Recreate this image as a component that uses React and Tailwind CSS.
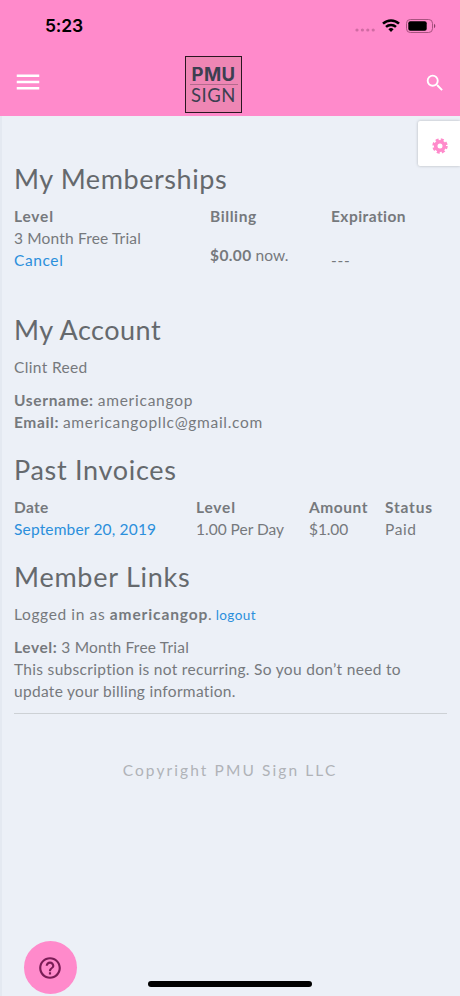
import React from "react";
import { MdMenu, MdSearch, MdHelpOutline } from "react-icons/md";

const link = "text-[#2b8fdc]";

function StatusBar() {
    return (
        <div className="flex h-[51px] items-center justify-between pl-[45px] pr-[24px]">
            <span className="font-['Inter'] text-[17.5px] font-semibold leading-none tracking-[-0.15px] text-black">
                5:23
            </span>
            <div className="flex items-center">
                <svg width="21" height="12" viewBox="0 0 21 12" className="mr-[6px]" fill="#d06ba3">
                    <circle cx="2" cy="10" r="1.6" />
                    <circle cx="7.4" cy="10" r="1.6" />
                    <circle cx="12.8" cy="10" r="1.6" />
                    <circle cx="18.2" cy="10" r="1.6" />
                </svg>
                <svg width="18" height="13" viewBox="0 0 18 13" className="mr-[6px]" fill="none" stroke="#000" strokeWidth="2.5">
                    <path d="M1 4.6a11.6 11.6 0 0 1 16 0" />
                    <path d="M4 7.9a7.3 7.3 0 0 1 10 0" />
                    <path d="M6.4 10.2a3.8 3.8 0 0 1 5.2 0L9 12.9z" fill="#000" stroke="none" />
                </svg>
                <svg width="30" height="14" viewBox="0 0 30 14">
                    <rect x="0.5" y="0.5" width="26" height="13" rx="3.8" fill="none" stroke="#a8527f" />
                    <rect x="2.3" y="2.3" width="18.4" height="9.4" rx="2" fill="#000" />
                    <path d="M28 4.8v4.4c1.8-.8 1.8-3.6 0-4.4z" fill="#8a3f67" />
                </svg>
            </div>
        </div>
    );
}

function Logo() {
    return (
        <div className="flex h-[57px] w-[57px] flex-col items-center border-[1.5px] border-[#2a1621] bg-[#ee86b4] pt-[8px] leading-none text-[#3c3f50]">
            <div className="flex h-[20px] w-[48px] justify-center border-b border-[#b36a8c] font-['Inter'] text-[18.5px] font-bold leading-[19px] tracking-[0.4px]">
                PMU
            </div>
            <div className="w-[48px] text-center font-['Lato'] text-[18.5px] leading-[21px] tracking-[0.5px]">
                SIGN
            </div>
        </div>
    );
}

function Heading({ children, className }) {
    return (
        <h2 className={"whitespace-nowrap text-[27px] leading-[30px] text-[#65696d] " + className}>
            {children}
        </h2>
    );
}

export default function App() {
    return (
        <div className="relative flex h-[996px] w-[460px] flex-col overflow-hidden bg-[#ecf0f7] font-['Lato',sans-serif] text-[15.5px] leading-[22px] text-[#76797d]">
            <header className="h-[116px] shrink-0 bg-[#ff8acb]">
                <StatusBar />
                <div className="flex h-[65px] items-center pl-[13px] pr-[14px]">
                    <MdMenu size={30} color="#fff" className="mb-[4px]" />
                    <div className="ml-[142px] mt-[1px]">
                        <Logo />
                    </div>
                    <MdSearch size={22} color="#fff" className="mb-[2px] ml-auto" />
                </div>
            </header>

            <main className="flex grow flex-col border-l-2 border-[#e4e9f1] pl-[12px] pr-[13px] pt-[48px]">
                <Heading className="tracking-[0.57px]">My Memberships</Heading>
                <div className="mt-[11px] grid grid-cols-[196px_121px_1fr]">
                    <div>
                        <div className="font-bold tracking-[0.8px]">Level</div>
                        <div className="tracking-[0.16px]">3 Month Free Trial</div>
                        <a className={"tracking-[0.6px] " + link}>Cancel</a>
                    </div>
                    <div>
                        <div className="font-bold tracking-[0.6px]">Billing</div>
                        <div className="mt-[17px]">
                            <b className="tracking-[0.4px]">$0.00</b> now.
                        </div>
                    </div>
                    <div>
                        <div className="font-bold tracking-[0.45px]">Expiration</div>
                        <div className="mt-[22px] tracking-[0.8px]">---</div>
                    </div>
                </div>

                <Heading className="mt-[44px] tracking-[0.5px]">My Account</Heading>
                <p className="mt-[11px] tracking-[0.35px]">Clint Reed</p>
                <p className="mt-[11px]">
                    <b className="tracking-[0.65px]">Username:</b>{" "}
                    <span className="tracking-[0.75px]">americangop</span>
                </p>
                <p>
                    <b className="tracking-[0.6px]">Email:</b>{" "}
                    <span className="tracking-[0.7px]">americangopllc@gmail.com</span>
                </p>

                <Heading className="mt-[22px] tracking-[0.7px]">Past Invoices</Heading>
                <div className="mt-[11px] grid grid-cols-[182px_113px_76px_1fr]">
                    <b className="tracking-[0.3px]">Date</b>
                    <b className="tracking-[0.8px]">Level</b>
                    <b className="tracking-[0.55px]">Amount</b>
                    <b className="tracking-[0.8px]">Status</b>
                    <a className={"tracking-[0.17px] " + link}>September 20, 2019</a>
                    <span>1.00 Per Day</span>
                    <span className="tracking-[-0.1px]">$1.00</span>
                    <span className="tracking-[0.6px]">Paid</span>
                </div>

                <Heading className="mt-[22px] tracking-[0.75px]">Member Links</Heading>
                <p className="mt-[11px] h-[22px]">
                    <span className="tracking-[0.63px]">Logged in as </span>
                    <b className="tracking-[0.87px]">americangop</b>.{" "}
                    <a className={"text-[13.5px] tracking-[0.4px] " + link}>logout</a>
                </p>
                <p className="mt-[11px]">
                    <b className="tracking-[0.6px]">Level:</b>{" "}
                    <span className="tracking-[0.2px]">3 Month Free Trial</span>
                </p>
                <p className="tracking-[0.31px]">
                    This subscription is not recurring. So you don’t need to
                </p>
                <p className="tracking-[0.3px]">update your billing information.</p>
                <hr className="mt-[11px] border-[#cdd1d5]" />
                <p className="mt-[45px] pr-[1px] text-center tracking-[2.1px] text-[#b0b3b8]">
                    Copyright PMU Sign LLC
                </p>
            </main>

            <button className="absolute right-0 top-[121px] flex h-[45px] w-[42px] items-center justify-center rounded-l-[2px] bg-white pl-[2px] pt-[4px] shadow-[0_0_3px_rgba(0,0,0,0.25)]">
                <svg width="16" height="16" viewBox="0 0 16 16" fill="none" stroke="#ff8acb">
                    <circle cx="8" cy="8" r="4.3" strokeWidth="3.6" />
                    <circle cx="8" cy="8" r="6.4" strokeWidth="2.6" strokeDasharray="2.9 2.127" />
                </svg>
            </button>
            <button className="absolute left-[24px] top-[941px] flex h-[53px] w-[53px] items-center justify-center rounded-full bg-[#ff8acb] pr-[1px]">
                <MdHelpOutline size={26} color="#7a1d56" />
            </button>
            <div className="absolute left-[148px] top-[981px] h-[6px] w-[164px] rounded-full bg-black" />
        </div>
    );
}
